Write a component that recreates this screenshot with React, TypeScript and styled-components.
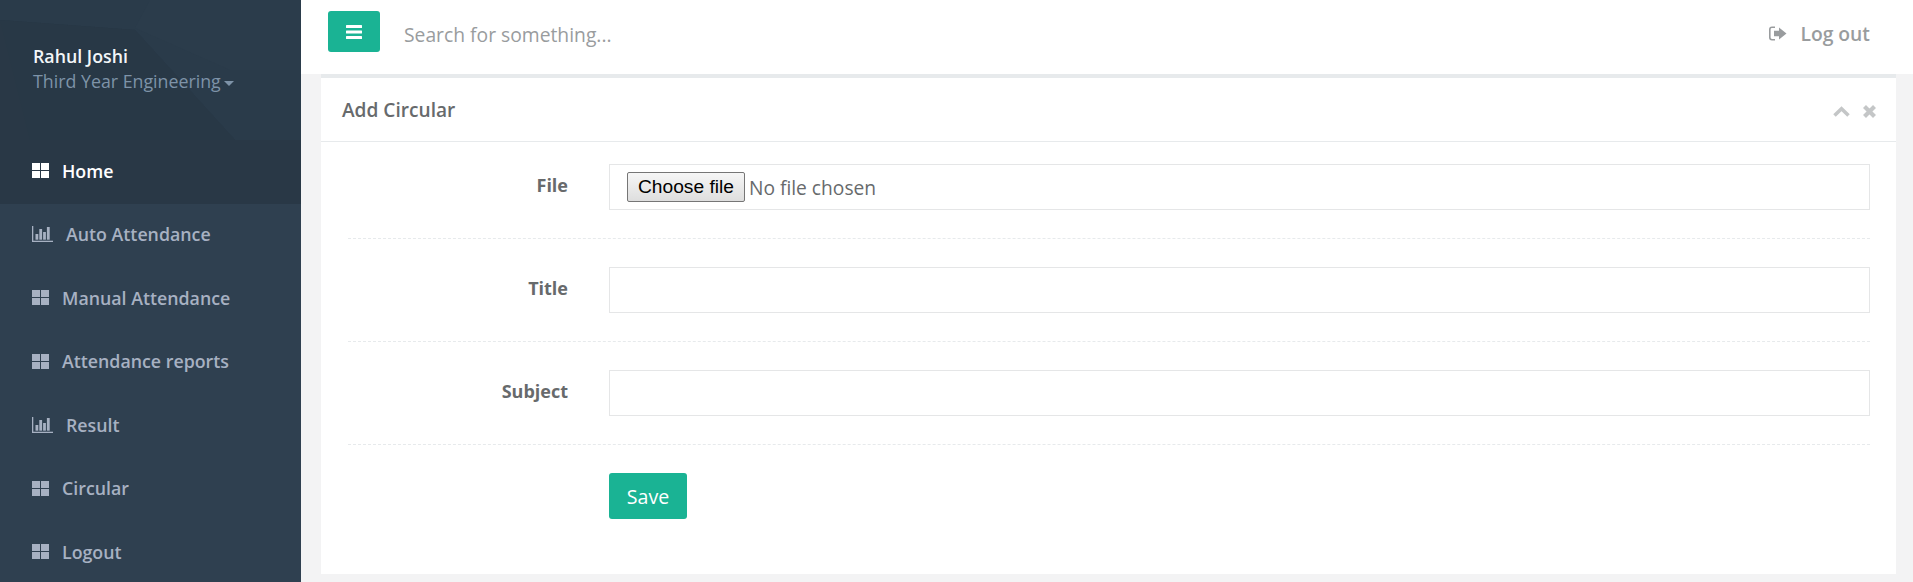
import React from "react";
import styled, { createGlobalStyle } from "styled-components";

const GlobalStyle = createGlobalStyle`
  html, body {
    margin: 0;
    padding: 0;
    height: 100%;
    background: #f3f3f4;
    font-family: "Open Sans", "Liberation Sans", sans-serif;
    color: #676a6c;
    overflow: hidden;
  }
`;

const Page = styled.div`
  display: flex;
  width: 1913px;
  height: 582px;
  overflow: hidden;
`;

const Sidebar = styled.nav`
  width: 301px;
  flex: none;
  background: #2f4050;
  display: flex;
  flex-direction: column;
`;

const Profile = styled.div`
  position: relative;
  height: 140px;
  flex: none;
  box-sizing: border-box;
  padding: 44px 0 0 33px;
  background: #293846;
  overflow: hidden;
`;

const ProfilePattern = styled.svg`
  position: absolute;
  left: 0;
  top: 0;
`;

const ProfileName = styled.div`
  position: relative;
  font-size: 17.8px;
  line-height: 24px;
  font-weight: 600;
  color: #f3f6f8;
`;

const ProfileRole = styled.div`
  position: relative;
  margin-top: 1px;
  font-size: 17.8px;
  line-height: 25px;
  color: #7e93a8;
  white-space: nowrap;
`;

const Caret = styled.span`
  display: inline-block;
  margin-left: 3px;
  vertical-align: 2px;
  border-top: 5px solid #7e93a8;
  border-left: 5px solid transparent;
  border-right: 5px solid transparent;
`;

const NavItem = styled.a<{ $active?: boolean }>`
  display: flex;
  align-items: center;
  height: 63.5px;
  flex: none;
  box-sizing: border-box;
  padding: 0 0 2px 32px;
  font-size: 17.8px;
  font-weight: 600;
  color: ${(p) => (p.$active ? "#ffffff" : "#a7b1c2")};
  background: ${(p) => (p.$active ? "#293846" : "transparent")};
`;

const NavIcon = styled.svg`
  flex: none;
  margin-right: 13px;
  fill: currentColor;
`;

const Main = styled.main`
  flex: 1;
  min-width: 0;
  display: flex;
  flex-direction: column;
`;

const TopBar = styled.header`
  height: 74px;
  flex: none;
  box-sizing: border-box;
  background: #ffffff;
  display: flex;
  align-items: flex-start;
  padding: 11px 43px 0 27px;
`;

const MenuButton = styled.button`
  width: 52px;
  height: 41px;
  border: none;
  border-radius: 3px;
  background: #1ab394;
  color: #ffffff;
  display: flex;
  align-items: center;
  justify-content: center;
  padding: 0;
`;

const Search = styled.input`
  flex: 1;
  margin: 5px 0 0 24px;
  height: 36px;
  border: none;
  outline: none;
  padding: 0;
  background: transparent;
  font: 400 19.3px "Open Sans", sans-serif;
  &::placeholder {
    color: #999c9e;
    opacity: 1;
  }
`;

const LogOut = styled.a`
  display: flex;
  align-items: center;
  height: 45px;
  font-size: 19.3px;
  font-weight: 600;
  color: #999c9e;
`;

const LogOutIcon = styled.svg`
  margin-right: 13px;
  fill: currentColor;
`;

const Content = styled.div`
  padding: 0 17px 0 20px;
`;

const Card = styled.section`
  background: #ffffff;
  border-top: 4px solid #e7eaec;
  height: 496px;
`;

const CardTitle = styled.div`
  height: 64px;
  box-sizing: border-box;
  border-bottom: 1px solid #e7eaec;
  display: flex;
  align-items: center;
  justify-content: space-between;
  padding: 0 20px 0 21px;
`;

const CardHeading = styled.h5`
  margin: 0;
  font-size: 19.1px;
  font-weight: 600;
  color: #676a6c;
`;

const CardTools = styled.div`
  display: flex;
  align-items: center;
  gap: 13px;
  color: #c4c6c7;
  margin-top: 3px;
`;

const Form = styled.form`
  padding: 22px 26px 0 27px;
`;

const Row = styled.div`
  display: flex;
  align-items: flex-start;
  gap: 41px;
  padding-bottom: 28px;
  margin-bottom: 28px;
  border-bottom: 1px dashed #e7eaec;
`;

const Label = styled.label`
  width: 220px;
  flex: none;
  text-align: right;
  font-size: 18px;
  line-height: 24px;
  font-weight: 700;
  padding-top: 9px;
  color: #676a6c;
`;

const FieldBox = styled.input`
  flex: 1;
  min-width: 0;
  height: 46px;
  box-sizing: border-box;
  border: 1px solid #e5e6e7;
  padding: 0 17px;
  background: #ffffff;
  outline: none;
  font: 400 19.2px "Open Sans", sans-serif;
  color: #676a6c;
`;

const FilePicker = styled.div`
  flex: 1;
  min-width: 0;
  height: 46px;
  box-sizing: border-box;
  border: 1px solid #e5e6e7;
  padding: 0 17px;
  display: flex;
  align-items: center;
  gap: 4px;
  font: 400 19.2px "Open Sans", sans-serif;
  color: #676a6c;
`;

const ChooseButton = styled.button`
  width: 118px;
  height: 30px;
  box-sizing: border-box;
  border: 1px solid #767676;
  border-radius: 2px;
  background: linear-gradient(#f6f6f6, #dedede);
  font: 400 19.2px "Liberation Sans", Arial, sans-serif;
  color: #000000;
  padding: 0;
`;

const Actions = styled.div`
  padding-left: 261px;
`;

const SaveButton = styled.button`
  width: 78px;
  height: 46px;
  border: none;
  border-radius: 3px;
  background: #1ab394;
  color: #ffffff;
  font: 400 19.6px "Open Sans", sans-serif;
  padding: 0;
`;

const GridIcon = () => (
  <NavIcon width="17" height="15" viewBox="0 0 17 15">
    <rect x="0" y="0" width="8" height="7" />
    <rect x="9" y="0" width="8" height="7" />
    <rect x="0" y="8" width="8" height="7" />
    <rect x="9" y="8" width="8" height="7" />
  </NavIcon>
);

const ChartIcon = () => (
  <NavIcon width="21" height="16" viewBox="0 0 21 16">
    <rect x="0" y="0" width="1.3" height="16" />
    <rect x="0" y="14.7" width="21" height="1.3" />
    <rect x="3.5" y="8" width="2.8" height="5.7" />
    <rect x="7.3" y="3" width="2.8" height="10.7" />
    <rect x="11.1" y="6" width="2.8" height="7.7" />
    <rect x="14.9" y="1" width="2.8" height="12.7" />
  </NavIcon>
);

const navItems = [
  { label: "Home", icon: "grid", active: true },
  { label: "Auto Attendance", icon: "chart" },
  { label: "Manual Attendance", icon: "grid" },
  { label: "Attendance reports", icon: "grid" },
  { label: "Result", icon: "chart" },
  { label: "Circular", icon: "grid" },
  { label: "Logout", icon: "grid" },
];

const textFields = ["Title", "Subject"];

export default function App() {
  return (
    <Page>
      <GlobalStyle />
      <Sidebar>
        <Profile>
          <ProfilePattern width="301" height="140" viewBox="0 0 301 140">
            <polygon points="0,0 301,0 301,140 235,140 135,30 0,20" fill="#2a3b4a" />
            <polygon points="150,0 301,0 301,70 230,70 135,28" fill="#2b3c4b" />
            <polygon points="0,20 135,30 235,140 30,140" fill="#283846" />
          </ProfilePattern>
          <ProfileName>Rahul Joshi</ProfileName>
          <ProfileRole>
            Third Year Engineering
            <Caret />
          </ProfileRole>
        </Profile>
        {navItems.map((item) => (
          <NavItem key={item.label} $active={item.active}>
            {item.icon === "grid" ? <GridIcon /> : <ChartIcon />}
            {item.label}
          </NavItem>
        ))}
      </Sidebar>
      <Main>
        <TopBar>
          <MenuButton aria-label="Toggle menu">
            <svg width="16" height="14" viewBox="0 0 16 14" fill="currentColor">
              <rect width="16" height="3" rx="0.5" />
              <rect y="5.5" width="16" height="3" rx="0.5" />
              <rect y="11" width="16" height="3" rx="0.5" />
            </svg>
          </MenuButton>
          <Search placeholder="Search for something..." />
          <LogOut>
            <LogOutIcon width="18" height="15" viewBox="0 0 18 15">
              <path d="M6 0.5H3A3 3 0 0 0 0 3.5v8a3 3 0 0 0 3 3h3v-1.6H3a1.4 1.4 0 0 1-1.4-1.4v-8A1.4 1.4 0 0 1 3 2.1h3z" />
              <path d="M5 4.8h5V1.5l7.5 6-7.5 6v-3.3H5z" />
            </LogOutIcon>
            Log out
          </LogOut>
        </TopBar>
        <Content>
          <Card>
            <CardTitle>
              <CardHeading>Add Circular</CardHeading>
              <CardTools>
                <svg width="17" height="11" viewBox="0 0 17 11" fill="none" stroke="currentColor" strokeWidth="3.6">
                  <path d="M1.5 9.5L8.5 2.8L15.5 9.5" />
                </svg>
                <svg width="13" height="13" viewBox="0 0 13 13" fill="none" stroke="currentColor" strokeWidth="4.2">
                  <path d="M1.5 1.5L11.5 11.5M11.5 1.5L1.5 11.5" />
                </svg>
              </CardTools>
            </CardTitle>
            <Form>
              <Row>
                <Label>File</Label>
                <FilePicker>
                  <ChooseButton type="button">Choose file</ChooseButton>
                  No file chosen
                </FilePicker>
              </Row>
              {textFields.map((label) => (
                <Row key={label}>
                  <Label>{label}</Label>
                  <FieldBox type="text" />
                </Row>
              ))}
              <Actions>
                <SaveButton type="button">Save</SaveButton>
              </Actions>
            </Form>
          </Card>
        </Content>
      </Main>
    </Page>
  );
}
